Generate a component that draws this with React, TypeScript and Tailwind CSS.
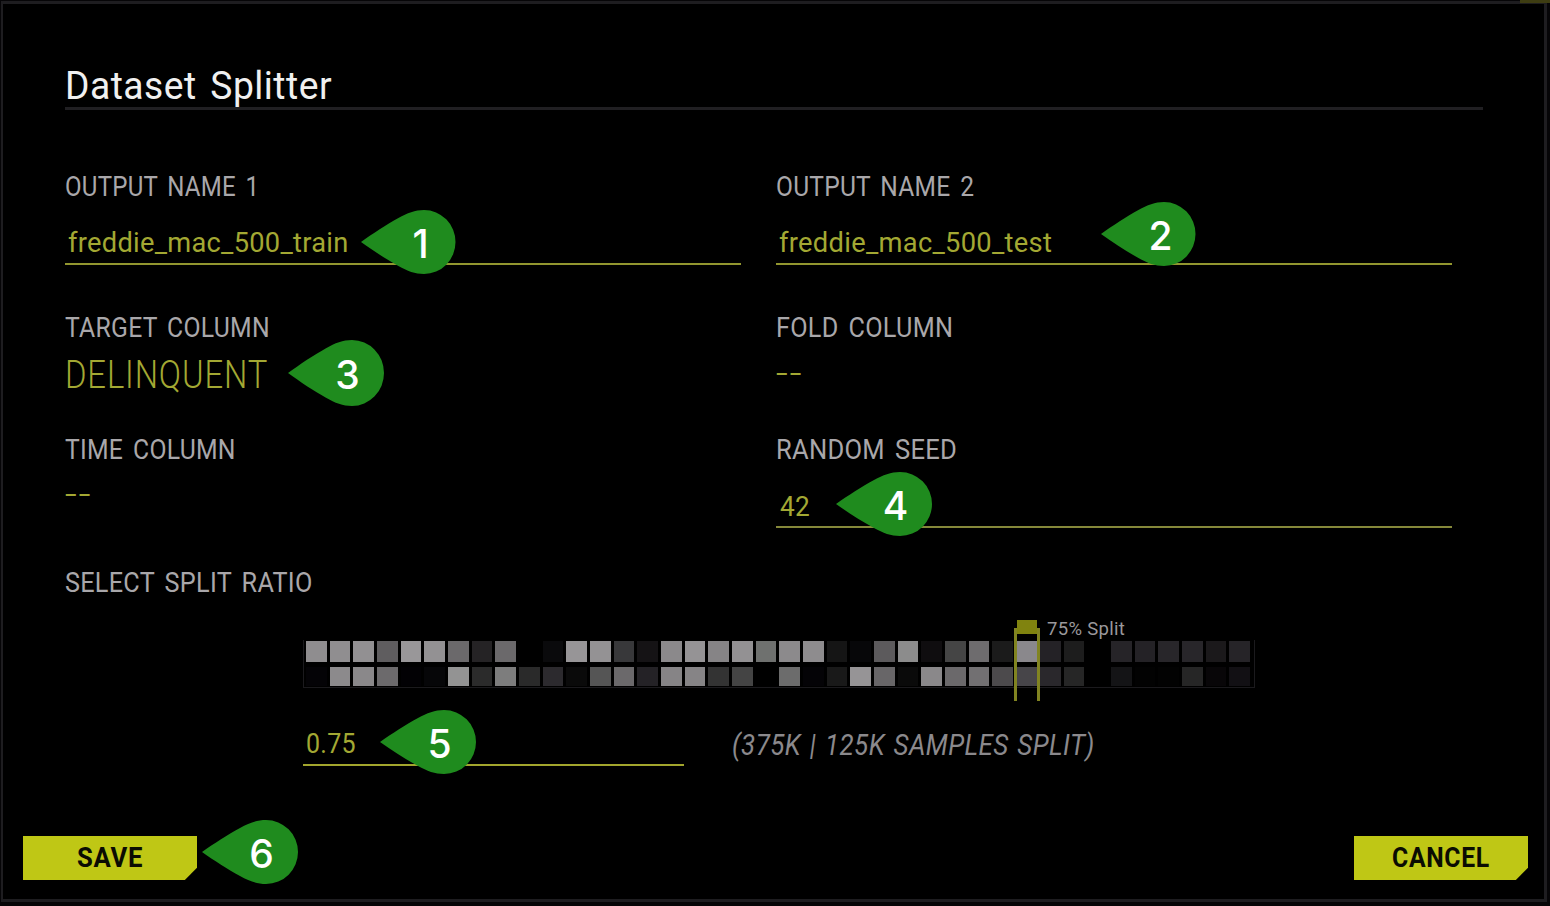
import { useLayoutEffect, useRef, useState } from "react";
import type { ReactNode } from "react";

/** One line of text, condensed horizontally so that it fills the given width. */
function Line({ width, className = "", children }: { width: number; className?: string; children: ReactNode }) {
  const ref = useRef<HTMLSpanElement>(null);
  const [scale, setScale] = useState(1);
  useLayoutEffect(() => {
    if (ref.current) setScale(width / ref.current.offsetWidth);
  }, [width]);
  return (
    <div style={{ width }} className="whitespace-nowrap">
      <span ref={ref} style={{ transform: `scaleX(${scale})` }} className={`inline-block origin-left align-top ${className}`}>
        {children}
      </span>
    </div>
  );
}

function Label({ width, children }: { width: number; children: ReactNode }) {
  return (
    <Line width={width} className="h-[30px] pt-px text-[28.5px] leading-[30px] tracking-[0.3px] text-[#a9a7aa] [word-spacing:4px]">
      {children}
    </Line>
  );
}

function Value({ width, children }: { width: number; children: ReactNode }) {
  return (
    <Line width={width} className="h-[30px] text-[28px] leading-[30px] tracking-[0.3px] text-[#a3a833]">
      {children}
    </Line>
  );
}

function EmptyValue() {
  return (
    <Line width={27} className="h-[30px] text-[28px] leading-[30px] tracking-[1.5px] text-[#a3a833]">
      --
    </Line>
  );
}

function Pin({ n, className }: { n: number; className: string }) {
  return (
    <div className={`absolute ${className}`}>
      <svg viewBox="0 0 96 64" className="block h-full w-full" preserveAspectRatio="none">
        <path
          d="M0 32C12 23.5 26 14.5 38 8C47 3 55 0 64 0A32 32 0 0 1 64 64C55 64 47 61 38 56C26 49.5 12 40.5 0 32Z"
          fill="#1f8b1e"
        />
      </svg>
      <span className="absolute inset-y-0 left-[39px] flex w-10 items-center justify-center pt-[2px] font-['Inter',sans-serif] text-[39px] font-medium leading-none tracking-[-1px] text-white">
        {n}
      </span>
    </div>
  );
}

const TOP_CELLS = [
  "#8f8d8f", "#908e90", "#929092", "#5f5d5f", "#999799", "#939193", "#6b696b", "#252325", "#6b696b", "#000000",
  "#0a0a0c", "#979597", "#949294", "#38383a", "#151315", "#8b898b", "#959395", "#868486", "#939193", "#6f716f",
  "#8c8a8c", "#8e8c8e", "#151515", "#070709", "#5c5a5c", "#8c8c8c", "#0f0d0f", "#454545", "#6e6c6e", "#1b1b1b",
  "#8a888c", "#242226", "#1d1d1d", "#000000", "#262428", "#242226", "#28262a", "#28262a", "#1b191b", "#262428",
];

const BOTTOM_CELLS = [
  "#040306", "#8c8a8c", "#8a888a", "#6c6a6c", "#020104", "#060608", "#939393", "#2b2b2b", "#7d7d7d", "#2a2a2a",
  "#2c2a2e", "#0a0a0a", "#555555", "#6b696b", "#242226", "#868486", "#868486", "#333333", "#444444", "#000000",
  "#6c6c6c", "#040306", "#191919", "#969496", "#686668", "#0a0a0a", "#8a888a", "#6b696b", "#727072", "#4c4a4c",
  "#474549", "#2a282c", "#262626", "#000000", "#141416", "#020202", "#020202", "#262626", "#080608", "#121014",
];

function CellRow({ cells, className }: { cells: string[]; className: string }) {
  return (
    <div className={`flex gap-[3px] ${className}`}>
      {cells.map((color, i) => (
        <div key={i} style={{ backgroundColor: color }} className="flex-1" />
      ))}
    </div>
  );
}

function ActionButton({ width, children }: { width: number; children: ReactNode }) {
  return (
    <button className="flex h-11 w-[174px] items-center justify-center bg-[#bfc715] pb-px [clip-path:polygon(0_0,100%_0,100%_72%,93%_100%,0_100%)]">
      <Line width={width} className="text-[28px] font-bold leading-[30px] tracking-[0.8px] text-[#0b0c02]">
        {children}
      </Line>
    </button>
  );
}

export default function App() {
  return (
    <div className="relative flex h-[906px] w-[1550px] flex-col overflow-hidden bg-[#060507] pb-1 pl-px pr-[3px] pt-px font-['Roboto',sans-serif]">
      <main className="flex flex-1 flex-col border-[3px] border-l-2 border-[#1e1d20] bg-black">
        <header className="ml-[62px] mt-[62px] h-[44px] w-[1418px] border-b-[3px] border-[#201f22]">
          <Line width={267} className="text-[38.5px] leading-10 tracking-[0.5px] text-[#f0f0f0] [word-spacing:4px]">Dataset Splitter</Line>
        </header>

        <div className="ml-[62px] mt-[61px] grid w-[1387px] grid-cols-2 gap-x-[35px]">
          <div className="h-[141px]">
            <Label width={194}>OUTPUT NAME 1</Label>
            <div className="mt-[27px] h-[37px] border-b-2 border-[#92962f] pl-[3px]">
              <Value width={281}>freddie_mac_500_train</Value>
            </div>
          </div>
          <div className="h-[141px]">
            <Label width={198}>OUTPUT NAME 2</Label>
            <div className="mt-[27px] h-[37px] border-b-2 border-[#92962f] pl-[3px]">
              <Value width={273}>freddie_mac_500_test</Value>
            </div>
          </div>

          <div className="h-[122px]">
            <Label width={205}>TARGET COLUMN</Label>
            <div className="mt-[13px]">
              <Line width={203} className="text-[38.5px] font-light leading-10 tracking-[1px] text-[#a3a833]">DELINQUENT</Line>
            </div>
          </div>
          <div className="h-[122px]">
            <Label width={177}>FOLD COLUMN</Label>
            <div className="mt-4">
              <EmptyValue />
            </div>
          </div>

          <div className="h-[133px]">
            <Label width={171}>TIME COLUMN</Label>
            <div className="mt-[15px]">
              <EmptyValue />
            </div>
          </div>
          <div className="h-[133px]">
            <Label width={181}>RANDOM SEED</Label>
            <div className="mt-[28px] h-[36px] border-b-2 border-[#85883a] pl-1">
              <Value width={30}>42</Value>
            </div>
          </div>
        </div>

        <section className="ml-[62px] flex flex-col">
          <Label width={248}>SELECT SPLIT RATIO</Label>
          <div className="relative ml-[238px] mt-[43px] flex h-12 w-[952px] flex-col border border-t-0 border-[#1b1a1d] pl-[2px] pr-[4px]">
            <CellRow cells={TOP_CELLS} className="mt-px h-[21px]" />
            <CellRow cells={BOTTOM_CELLS} className="mt-[5px] h-[19px]" />
            <div className="absolute left-[709.5px] top-[-12px] h-[73px] w-[26px] border-x-[3px] border-[#818421]">
              <div className="absolute left-0 top-[-8px] h-[14px] w-5 bg-[#80830f]" />
            </div>
            <div className="absolute left-[743px] top-[-21px]">
              <Line width={78} className="text-[19px] leading-5 tracking-[0.3px] text-[#9a989b]">75% Split</Line>
            </div>
          </div>
          <div className="ml-[238px] mt-[41px] flex">
            <div className="h-[37px] w-[381px] border-b-2 border-[#a2a52d] pl-[3px]">
              <Value width={50}>0.75</Value>
            </div>
            <div className="ml-[48px] mt-[2px]">
              <Line width={363} className="text-[28.5px] italic leading-[30px] tracking-[0.5px] text-[#8b898c] [word-spacing:2px]">(375K | 125K SAMPLES SPLIT)</Line>
            </div>
          </div>
        </section>

        <footer className="ml-5 mr-4 mt-[70px] flex justify-between">
          <ActionButton width={66}>SAVE</ActionButton>
          <ActionButton width={98}>CANCEL</ActionButton>
        </footer>
      </main>

      <div className="absolute right-0 top-0 h-[3px] w-[30px] bg-[#3e3d12]" />
      <Pin n={1} className="left-[361px] top-[210px] h-16 w-[94.5px]" />
      <Pin n={2} className="left-[1101px] top-[202px] h-16 w-[94.5px]" />
      <Pin n={3} className="left-[288px] top-[340px] h-[66px] w-24" />
      <Pin n={4} className="left-[836px] top-[472px] h-16 w-24" />
      <Pin n={5} className="left-[380px] top-[710px] h-16 w-24" />
      <Pin n={6} className="left-[202px] top-[820px] h-16 w-24" />
    </div>
  );
}
